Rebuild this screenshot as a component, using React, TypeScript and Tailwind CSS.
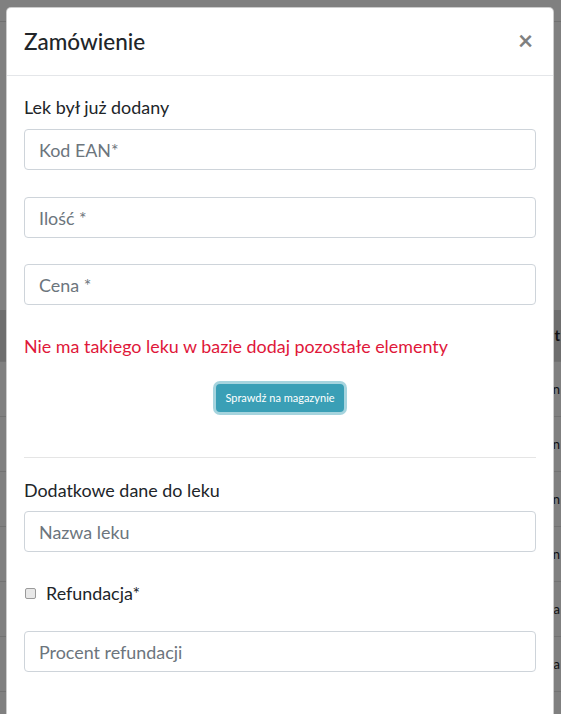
import React from "react";

const font = { fontFamily: '"Segoe UI", Lato, "Open Sans", sans-serif' };

function Field({ placeholder }: { placeholder: string }) {
  return (
    <div className="h-[41px] w-full rounded-[4px] border border-[#ced4da] bg-white px-[14px] pt-[2px] flex items-center text-[17.9px] text-[#6c757d]">
      {placeholder}
    </div>
  );
}

export default function App() {
  const rows = ["n", "n", "n", "n", "a", "a"];
  return (
    <div className="relative h-[714px] w-[561px] overflow-hidden bg-[#808080]" style={font}>
      {/* background page dimmed */}
      <div className="flex flex-col">
        <div className="h-[22px] border-b border-[#707070]" />
        <div className="h-[288px]" />
        <div className="h-[51px] bg-[#6e6e6e] flex items-center justify-end pr-[1px] text-[15px] font-bold text-[#111]">
          <span className="leading-none">t</span>
        </div>
        {rows.map((r, i) => (
          <div key={i} className="h-[55px] border-t border-[#727272] flex items-center justify-end pr-[1px] text-[13px] text-[#111]">
            <span className="leading-none">{r}</span>
          </div>
        ))}
        <div className="h-[55px] border-t border-[#727272]" />
      </div>

      {/* modal */}
      <div className="absolute left-[6px] top-[7px] w-[548px] rounded-[5px] border border-[rgba(0,0,0,0.2)] bg-white text-[#212529]">
        <div className="h-[68px] border-b border-[#e4e6e9] flex items-center justify-between pl-[17px] pr-[20px]">
          <h5 className="text-[22.5px] font-medium leading-[33px]">Zamówienie</h5>
          <span className="text-[26px] font-bold leading-none text-[#808080] -mt-[4px]">×</span>
        </div>
        <div className="px-[17px] pt-[18px] pb-[80px] flex flex-col text-[17.9px]">
          <div className="leading-[26px]">Lek był już dodany</div>
          <div className="mt-[9px]"><Field placeholder="Kod EAN*" /></div>
          <div className="mt-[27px]"><Field placeholder="Ilość *" /></div>
          <div className="mt-[26px]"><Field placeholder="Cena *" /></div>
          <div className="mt-[28px] leading-[26px] text-[#e0173a]">
            Nie ma takiego leku w bazie dodaj pozostałe elementy
          </div>
          <div className="mt-[25px] flex justify-center">
            <div className="h-[28px] w-[128px] rounded-[4px] bg-[#3a9fb6] text-white text-[11px] flex items-center justify-center shadow-[0_0_0_3px_rgba(58,159,182,0.45)]">
              Sprawdź na magazynie
            </div>
          </div>
          <div className="mt-[45px] h-px bg-[#e5e5e5]" />
          <div className="mt-[19px] leading-[26px]">Dodatkowe dane do leku</div>
          <div className="mt-[8px]"><Field placeholder="Nazwa leku" /></div>
          <div className="mt-[28px] flex items-center h-[26px]">
            <span className="ml-[1px] w-[11px] h-[11px] rounded-[2px] border border-[#9a9a9a] bg-[#e8e8e8]" />
            <span className="ml-[10px] leading-[26px]">Refundacja*</span>
          </div>
          <div className="mt-[25px]"><Field placeholder="Procent refundacji" /></div>
        </div>
      </div>
    </div>
  );
}
